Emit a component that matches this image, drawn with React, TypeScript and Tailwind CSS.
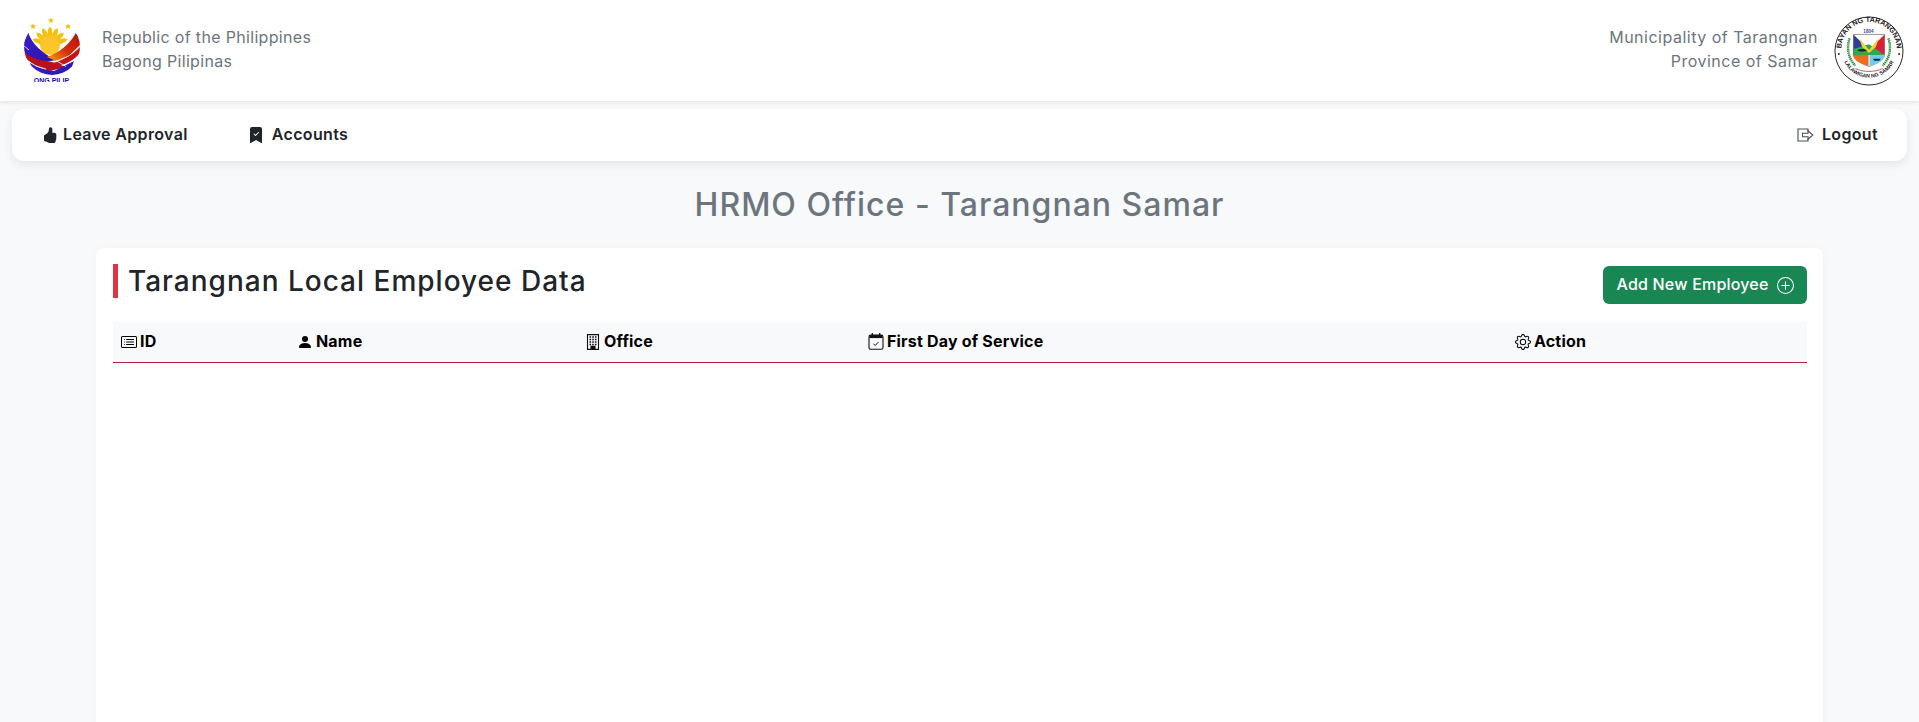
import React from "react";
import {
  BsBookmarkCheckFill,
  BsCardList,
  BsGear,
  BsHandThumbsUpFill,
  BsPersonFill,
  BsPlusCircle,
} from "react-icons/bs";

const FONT = "font-['Inter','Liberation_Sans',sans-serif]";

// hollow arrow leaving a box
const LogoutIcon = () => (
  <svg width="17" height="14" viewBox="0 0 17 14" fill="none" stroke="#4a4f55" strokeWidth="1.1">
    <path d="M11 3.2V1H1v12h10v-2.2" />
    <path d="M5.5 5.2h5.5V2.8L15.8 7 11 11.2V8.8H5.5z" />
  </svg>
);

const OfficeIcon = () => (
  <svg width="16" height="16" viewBox="0 0 16 16" fill="none" stroke="#111" strokeWidth="1.1">
    <path d="M2.500.6h11v14.800h-11z" />
    <path d="M4.500 3h7M4.500 5.500h7M4.500 8h7M4.500 10.500h7" strokeWidth="1.4" strokeDasharray="1.6 1.100" />
    <path d="M6 15.400v-3h4v3z" fill="#111" />
  </svg>
);

const CalendarIcon = () => (
  <svg width="16" height="17" viewBox="0 0 16 17" fill="none" stroke="#111" strokeWidth="1.1">
    <rect x="1" y="2.100" width="14" height="14.200" rx="1.800" />
    <path d="M1.500 3.600h13" strokeWidth="3" />
    <path d="M4.300 0v2.500M11.700 0v2.500" strokeWidth="1.300" />
    <path d="M5.500 10.800l1.700 1.700 3.200-3.400" strokeWidth="1" />
  </svg>
);

const RAYS = [-72, -48, -24, 0, 24, 48, 72];

const BagongPilipinasLogo = () => (
  <svg width="64" height="70" viewBox="0 0 64 70" className="shrink-0">
    <defs>
      <clipPath id="ph-disc">
        <circle cx="32" cy="31" r="28" />
      </clipPath>
      <linearGradient id="ph-right" x1="1" y1="0" x2="0" y2="1">
        <stop offset="0" stopColor="#b10f12" />
        <stop offset="0.55" stopColor="#d3300c" />
        <stop offset="1" stopColor="#f5a70e" />
      </linearGradient>
      <linearGradient id="ph-blue" x1="0" y1="0" x2="1" y2="1">
        <stop offset="0" stopColor="#3a1fc9" />
        <stop offset="1" stopColor="#2a12b0" />
      </linearGradient>
    </defs>
    <g fill="#f4c20d">
      <path d="M13 7.400l.9 1.900 2.100.2-1.600 1.400.5 2-1.900-1-1.900 1 .5-2-1.600-1.400 2.100-.2z" />
      <path d="M31 1.400l.9 1.900 2.100.2-1.600 1.400.5 2-1.900-1-1.900 1 .5-2-1.600-1.400 2.100-.2z" />
      <path d="M48 7.400l.9 1.900 2.100.2-1.600 1.400.5 2-1.900-1-1.900 1 .5-2-1.600-1.400 2.100-.2z" />
      {RAYS.map((deg) => (
        <path key={deg} d="M27 24 L28 13.500 L30 10.500 L32 13.500 L33 24z" transform={`rotate(${deg} 30 29)`} />
      ))}
    </g>
    <circle cx="30" cy="29" r="10" fill="#fbc62a" />
    <g clipPath="url(#ph-disc)">
      <path d="M8.300 16.700 C12 28 22 37 36 44 L20 47 L8 44 L2 30z" fill="url(#ph-blue)" />
      <path d="M56 16.700 C50 28 40 36 27 41 L36 45 L50 39 L62 28z" fill="url(#ph-right)" />
      <path d="M3 35 C10 42 20 44 32 46 L46 51 L30 55 C18 51 10 47 5 41z" fill="#b5121b" />
      <path d="M61 30 C54 38 44 44 33 47 L40 50 C50 46 57 42 60 36z" fill="#c3151b" />
      <path d="M10 47 C18 52 26 54 34 55 L54 45 L48 62 L14 62z" fill="url(#ph-blue)" />
      <path d="M4 30 L9 34 M36 44.500 L46 50.500 M60 29.500 L50 39 M16 50 L26 53" stroke="#fff" strokeWidth="0.8" />
    </g>
    <svg x="13" y="62" width="37" height="4" viewBox="0 0 37 4">
      <text x="18.500" y="5" textAnchor="middle" fontSize="7" fontWeight="700" fill="#1b12a8" fontFamily="Liberation Sans, sans-serif">ONG PILIP</text>
    </svg>
  </svg>
);

const TarangnanSeal = () => (
  <svg width="70" height="70" viewBox="0 0 72 72" className="shrink-0">
    <defs>
      <path id="seal-top" d="M8.500 42 A28.500 28.500 0 1 1 63.500 42" />
      <path id="seal-bottom" d="M10.500 47 A28 28 0 0 0 61.500 47" />
    </defs>
    <circle cx="36" cy="36" r="35" fill="#fff" stroke="#222" strokeWidth="1" />
    <text fontSize="7.400" fontWeight="700" fill="#222" fontFamily="Liberation Sans, sans-serif">
      <textPath href="#seal-top" startOffset="50%" textAnchor="middle">BAYAN NG TARANGNAN</textPath>
    </text>
    <text fontSize="5.400" fontWeight="700" fill="#222" fontFamily="Liberation Sans, sans-serif">
      <textPath href="#seal-bottom" startOffset="50%" textAnchor="middle">LALAWIGAN NG SAMAR</textPath>
    </text>
    <circle cx="5" cy="39" r="1" fill="#222" />
    <circle cx="67" cy="39" r="1" fill="#222" />
    <text x="35.500" y="17" textAnchor="middle" fontSize="4.800" fontWeight="700" fill="#4a3fb5" fontFamily="Liberation Sans, sans-serif">1804</text>
    <path d="M20 19h32v20c0 6-6 9-16 13-10-4-16-7-16-13z" fill="#fff" stroke="#333" strokeWidth="0.5" />
    <path d="M20 19l14 14-14 8z" fill="#2f3d9c" />
    <path d="M52 19L38 33l14 7z" fill="#d8203a" />
    <path d="M20 34 L36 29 L52 40 H20z" fill="#2fa84f" />
    <path d="M26 23l10 12 10-12-3 9-7 6-7-6z" fill="#f6d32d" />
    <path d="M20 40h15.500v11.500c-9-3-15.500-6-15.500-11.500z" fill="#ef6c1a" />
    <path d="M36.500 40H52c0 6-7 9-15.500 11.500z" fill="#6fcdf2" />
    <path d="M24 35.500c3-2 7-2 10 0-3 1.500-7 1.500-10 0z" fill="#123" />
    <path d="M40 44h8l-1.500 2h-5z" fill="#123" />
    <path d="M16 23c-3 9-2 20 6 28" stroke="#2c8a3a" strokeWidth="2.600" strokeDasharray="1.400 0.700" fill="none" />
    <path d="M56 23c3 9 2 20-6 28" stroke="#2c8a3a" strokeWidth="2.600" strokeDasharray="1.400 0.700" fill="none" />
    <path d="M22 54c8 4 20 4 28 0" stroke="#a33" strokeWidth="0.8" fill="none" />
  </svg>
);

const columns = [
  { label: "ID", icon: <BsCardList size={16} />, width: "w-[176px]" },
  { label: "Name", icon: <BsPersonFill size={16} />, width: "w-[288px]" },
  { label: "Office", icon: <OfficeIcon />, width: "w-[283px]" },
  { label: "First Day of Service", icon: <CalendarIcon />, width: "w-[647px]" },
  { label: "Action", icon: <BsGear size={16} />, width: "" },
];

export default function App() {
  return (
    <div className={`${FONT} h-screen overflow-hidden bg-[#f8f9fa]`}>
      <header className="flex h-[101px] items-center justify-between bg-white pl-5 pr-[15px] shadow-[0_2px_4px_rgba(0,0,0,0.08)]">
        <div className="flex items-center gap-[18px]">
          <BagongPilipinasLogo />
          <div className="-mt-[3px] text-[16px] leading-6 tracking-[0.33px] text-[#6c757d]">
            <div>Republic of the Philippines</div>
            <div>Bagong Pilipinas</div>
          </div>
        </div>
        <div className="flex items-center gap-[16px]">
          <div className="-mt-[3px] text-right text-[16px] leading-6 tracking-[0.5px] text-[#6c757d]">
            <div>Municipality of Tarangnan</div>
            <div>Province of Samar</div>
          </div>
          <TarangnanSeal />
        </div>
      </header>

      <nav className="mx-3 mt-2 flex h-[52px] items-center justify-between rounded-xl bg-white pl-[30px] pr-[29px] text-[16px] font-semibold tracking-[0.35px] text-[#212529] shadow-[0_4px_10px_rgba(0,0,0,0.08)]">
        <div className="flex items-center gap-[60px]">
          <a className="flex items-center gap-[5px]">
            <BsHandThumbsUpFill size={16} />
            <span className="-mt-0.5">Leave Approval</span>
          </a>
          <a className="flex items-center gap-[8px]">
            <BsBookmarkCheckFill size={16} />
            <span className="-mt-0.5">Accounts</span>
          </a>
        </div>
        <a className="flex items-center gap-2">
          <LogoutIcon />
          <span className="-mt-0.5">Logout</span>
        </a>
      </nav>

      <h2 className="mt-[22px] text-center text-[32px] leading-[43px] font-medium tracking-[1px] text-[#6c757d]">
        HRMO Office - Tarangnan Samar
      </h2>

      <section className="mx-auto mt-[22px] h-[600px] w-[90%] rounded-lg bg-white pl-[17px] pr-[16px] pt-4 shadow-[0_0_10px_rgba(0,0,0,0.03)]">
        <div className="flex items-start justify-between">
          <h3 className="border-l-[5px] border-[#dc3545] pl-[10px] text-[28px] leading-[34px] font-medium tracking-[1px] text-[#212529]">
            Tarangnan Local Employee Data
          </h3>
          <button className="mt-0.5 flex h-[38px] w-[204px] items-center justify-center gap-2 rounded-md bg-[#198754] text-[16px] font-medium tracking-[0.2px] text-white">
            <span className="-mt-0.5">Add New Employee</span>
            <BsPlusCircle size={17} />
          </button>
        </div>

        <table className="mt-[18px] w-full table-fixed border-collapse">
          <thead>
            <tr className="h-[40px] border-b border-[#b02a37] bg-[#f8f9fa]">
              {columns.map((col) => (
                <th key={col.label} className={`${col.width} px-2 text-left text-[16px] font-bold tracking-[0.2px] text-black`}>
                  <span className="flex items-center gap-[3px]">
                    {col.icon}
                    <span className="-mt-px">{col.label}</span>
                  </span>
                </th>
              ))}
            </tr>
          </thead>
        </table>
      </section>
    </div>
  );
}
